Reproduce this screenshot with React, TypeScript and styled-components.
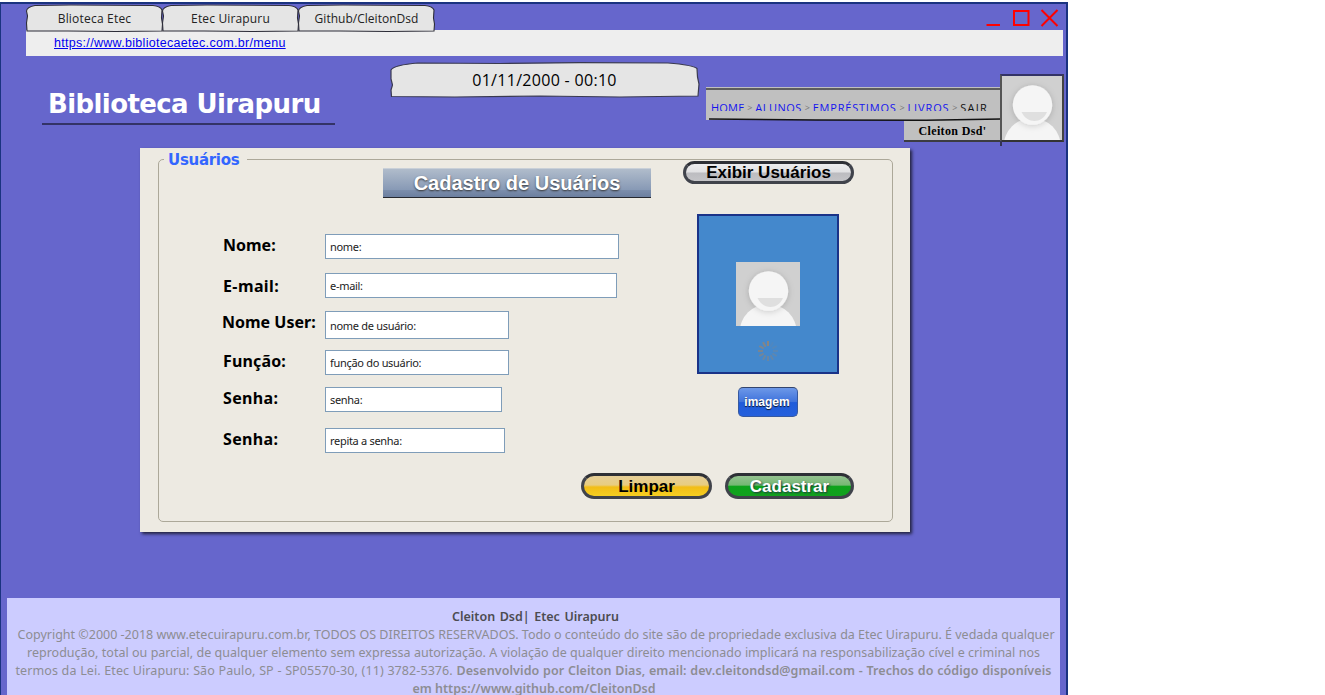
import React from "react";
import styled, { createGlobalStyle } from "styled-components";

const Global = createGlobalStyle`
  *, *::before, *::after { box-sizing: border-box; }
  body { margin: 0; background: #fff; overflow: hidden; }
`;

const sketch = `"Open Sans", "Noto Sans", sans-serif`;
const tahoma = `"Noto Sans", "DejaVu Sans", sans-serif`;
const arial = `"Liberation Sans", Arial, sans-serif`;

const Window = styled.div`
  width: 1068px;
  height: 693px;
  margin-top: 2px;
  background: #6666cc;
  border: solid #1a3380;
  border-width: 2px 2px 0 1px;
  display: flex;
  flex-direction: column;
  overflow: hidden;
`;

const TitleBar = styled.div`
  height: 26px;
  flex: none;
  padding: 0 6px 0 25px;
  display: flex;
  justify-content: space-between;
`;

const Tabs = styled.div`
  display: flex;
  position: relative;
  z-index: 1;
  height: 28px;
`;

const Tab = styled.div<{ $spacing: number }>`
  width: 136px;
  height: 28px;
  position: relative;
  display: flex;
  align-items: center;
  justify-content: center;
  white-space: nowrap;
  font: 12px ${sketch};
  letter-spacing: ${(p) => p.$spacing}px;
  color: #222;
  padding-left: 1px;
`;

const Outline = styled.svg`
  position: absolute;
  inset: 0;
  z-index: -1;
  overflow: visible;
`;

const Controls = styled.svg`
  width: 74px;
  height: 26px;
`;

const AddressBar = styled.div`
  flex: none;
  height: 26px;
  margin: 0 3px 0 25px;
  padding: 5px 0 0 28px;
  background: #eee;
  font: 12.5px/16px ${arial};
`;

const Url = styled.a`
  color: #0000ee;
  text-decoration: underline;
  letter-spacing: 0.3px;
`;

const Header = styled.header`
  flex: none;
  height: 92px;
  display: flex;
  align-items: flex-start;
`;

const Brand = styled.h1`
  margin: 30px 0 0 41px;
  width: 293px;
  height: 39px;
  padding-left: 6px;
  border-bottom: 2px solid #333366;
  font: bold 26px/37px "DejaVu Sans", sans-serif;
  letter-spacing: -0.6px;
  color: #fff;
  white-space: nowrap;
`;

const Clock = styled.div`
  position: relative;
  z-index: 0;
  margin: 6px 0 0 55px;
  width: 309px;
  height: 36px;
  display: flex;
  align-items: center;
  justify-content: center;
  font: 16px ${sketch};
  letter-spacing: 0.3px;
  color: #000;
`;

const Account = styled.div`
  flex: none;
  margin: 18px 0 0 7px;
  display: flex;
  align-items: flex-start;
`;

const AccountText = styled.div`
  margin-top: 13px;
  width: 295px;
  display: flex;
  flex-direction: column;
  align-items: flex-end;
`;

const Nav = styled.nav`
  position: relative;
  width: 295px;
  height: 33px;
  padding: 11px 0 0 5px;
  background: linear-gradient(#c0c0c0 1px, #5d5d5d 1px, #5d5d5d 3px, #c0c0c0 3px);
`;

const Crumbs = styled.div`
  width: 277px;
  height: 13px;
  overflow: hidden;
  display: flex;
  justify-content: space-between;
  white-space: nowrap;
  font: 11px/19px ${sketch};
  color: #111;
`;

const Crumb = styled.span<{ $link?: boolean; $spacing?: number }>`
  color: ${(p) => (p.$link ? "#1414ee" : "#111")};
  letter-spacing: ${(p) => p.$spacing ?? 0}px;
`;

const Chevron = styled.span`
  color: #777;
  font-size: 9px;
`;

const UserName = styled.div`
  width: 97px;
  height: 22px;
  background: #c0c0c0;
  border-bottom: 2px solid #3c3c42;
  font: bold 12px/22px "Liberation Serif", "Times New Roman", serif;
  letter-spacing: 0.35px;
  text-align: center;
  color: #000;
`;

const AvatarFrame = styled.div`
  position: relative;
  width: 64px;
  height: 68px;
  margin-left: -1px;
  border: 2px solid #333366;
  border-left-color: #555;
  border-right-color: #444;
  border-bottom-color: #333;
  &::after {
    content: "";
    position: absolute;
    left: -2px;
    bottom: -6px;
    width: 2px;
    height: 5px;
    background: #333355;
  }
`;

const Panel = styled.main`
  flex: none;
  width: 770px;
  height: 384px;
  margin-left: 139px;
  padding: 11px 17px 10px 18px;
  background: #edeae2;
  box-shadow: 2px 2px 3px #22223f;
`;

const Fieldset = styled.section`
  position: relative;
  height: 363px;
  border: 1px solid #aca899;
  border-radius: 5px;
`;

const Legend = styled.div`
  position: absolute;
  left: 5px;
  top: -9px;
  width: 83px;
  padding-left: 4px;
  background: #edeae2;
  color: #3366ff;
  font: bold 15px/19px "DejaVu Sans", sans-serif;
  letter-spacing: -0.3px;
`;

const PanelTop = styled.div`
  height: 54px;
  display: flex;
  align-items: flex-start;
  padding: 1px 0 0 224px;
  gap: 32px;
`;

const Title = styled.h2`
  margin: 7px 0 0;
  width: 268px;
  height: 30px;
  border-top: 1px solid #c9d0d8;
  border-bottom: 1px solid #26282e;
  background: linear-gradient(#b0bccb, #8799b5 75%, #7b8dab 76%, #6c7f9f);
  color: #fff;
  font: bold 20px/28px ${arial};
  text-align: center;
  text-shadow: 0 1px 2px #333;
`;

const pillFills = {
  silver: "linear-gradient(#f1f1f2, #e1e1e3 48%, #bcbcc0 52%, #c7c7ca)",
  gold: "linear-gradient(#e5cfa0, #e8cd80 46%, #f2bd16 54%, #f6d426)",
  green: "linear-gradient(#9fc59a, #75b873 46%, #0da31b 52%, #14a020)",
};

const Pill = styled.button<{ $tone: keyof typeof pillFills; $width: number; $height: number }>`
  width: ${(p) => p.$width}px;
  height: ${(p) => p.$height}px;
  padding: ${(p) => (p.$height > 24 ? 1 : 0)}px 0 0;
  border: 3px solid #40434b;
  border-top-color: #2e3036;
  border-radius: 13px;
  background: ${(p) => pillFills[p.$tone]};
  background-origin: border-box;
  color: ${(p) => (p.$tone === "green" ? "#fff" : "#000")};
  text-shadow: ${(p) => (p.$tone === "green" ? "1px 1px 2px #234" : "none")};
  font: bold 17px/17px ${arial};
`;

const PanelBody = styled.div`
  display: flex;
  height: 259px;
`;

const Form = styled.form`
  width: 475px;
  margin-left: 63px;
  padding-top: 20px;
`;

const Field = styled.label<{ $gap: number; $height: number }>`
  display: flex;
  align-items: flex-start;
  height: ${(p) => p.$height}px;
  margin-bottom: ${(p) => p.$gap}px;
`;

const LabelText = styled.span<{ $spacing: number; $nudge: number; $inset: number }>`
  width: 103px;
  padding-left: ${(p) => p.$inset}px;
  margin-top: ${(p) => p.$nudge}px;
  font: bold 16px/22px ${tahoma};
  letter-spacing: ${(p) => p.$spacing}px;
  white-space: nowrap;
  color: #000;
`;

const Input = styled.input<{ $width: number }>`
  width: ${(p) => p.$width}px;
  height: 100%;
  border: 1px solid #7f9db9;
  padding: 1px 4px 1px;
  background: #fff;
  font: 11px ${tahoma};
  letter-spacing: -0.3px;
  color: #222;
`;

const PhotoColumn = styled.div`
  width: 142px;
  display: flex;
  flex-direction: column;
  align-items: center;
`;

const Photo = styled.div`
  width: 142px;
  height: 160px;
  padding-top: 46px;
  border: 2px solid #1a3388;
  background: #4488cc;
  display: flex;
  flex-direction: column;
  align-items: center;
  gap: 15px;
`;

const ImageButton = styled.button`
  margin-top: 13px;
  width: 60px;
  height: 30px;
  padding: 0 2px 0 0;
  border: 1px solid #3659a0;
  border-top-color: #33456e;
  border-radius: 5px;
  background: linear-gradient(#6d98e8, #3f73dc 49%, #1f5cda 52%, #2560dc);
  color: #fff;
  font: bold 12px/26px ${arial};
  text-shadow: 0 1px 1px #112;
`;

const Actions = styled.div`
  display: flex;
  justify-content: flex-end;
  gap: 13px;
  padding-right: 38px;
`;

const Footer = styled.footer`
  flex: none;
  width: 1053px;
  height: 110px;
  margin: 66px 0 0 6px;
  padding-top: 10px;
  background: #ccccff;
  display: flex;
  flex-direction: column;
  align-items: center;
  font: 12.5px/18px ${tahoma};
  color: #8d8d93;
`;

const FooterLine = styled.div<{ $width: number; $spacing: number; $shift?: number; $dark?: boolean; $strong?: boolean }>`
  width: ${(p) => p.$width}px;
  margin-left: ${(p) => p.$shift ?? 0}px;
  white-space: nowrap;
  text-align-last: justify;
  letter-spacing: ${(p) => p.$spacing}px;
  font-weight: ${(p) => (p.$strong ? 600 : 400)};
  color: ${(p) => (p.$dark ? "#4c4c52" : "inherit")};
  b { font-weight: 600; }
`;

function TabOutline() {
  return (
    <Outline width="136" height="28" viewBox="0 0 136 28">
      <path
        d="M1 27 L.5 19 L1.500 12 L.5 7 Q1 3 9 1.500 L45 1 L127 1.500 Q135 2.500 136 6 L135.500 14 L136.500 20 L136 27 L90 27.500 L42 27 Z"
        fill="#e5e5e5" stroke="#2d2d38" strokeWidth="1.1"
      />
    </Outline>
  );
}

function Avatar({ width, height, id }: { width: number; height: number; id: string }) {
  return (
    <svg width={width} height={height} viewBox="0 0 64 64" preserveAspectRatio="xMidYMax slice" style={{ display: "block" }}>
      <defs>
        <filter id={id} x="-30%" y="-30%" width="160%" height="160%">
          <feDropShadow dx="0" dy="1" stdDeviation="3" floodColor="#000" floodOpacity="0.18" />
        </filter>
      </defs>
      <rect width="64" height="64" fill="#d0d0d0" />
      <circle cx="32.200" cy="70.500" r="28.500" fill="#f5f5f5" />
      <circle cx="32.500" cy="29" r="19.700" fill="#f5f5f5" filter={`url(#${id})`} />
      <path d="M21.500 36 H47 C42 48 27 48 21.500 36 Z" fill="#dfdfdf" />
    </svg>
  );
}

function Spinner() {
  return (
    <svg width="20" height="20" viewBox="-10 -10 20 20">
      {Array.from({ length: 12 }, (_, i) => (
        <line
          key={i} x1="0" y1="-5" x2="0" y2="-10" stroke="#8a8580" strokeWidth="2"
          opacity={1 - i * 0.078} transform={`rotate(${-i * 30})`}
        />
      ))}
    </svg>
  );
}

const fields = [
  { label: "Nome:", value: "nome:", width: 294, height: 25, gap: 14, nudge: 0, spacing: 0, inset: 1 },
  { label: "E-mail:", value: "e-mail:", width: 292, height: 25, gap: 13, nudge: 2, spacing: 0.4, inset: 1 },
  { label: "Nome User:", value: "nome de usuário:", width: 184, height: 28, gap: 11, nudge: 0, spacing: 0, inset: 0 },
  { label: "Função:", value: "função do usuário:", width: 184, height: 25, gap: 12, nudge: 0, spacing: 0.15, inset: 1 },
  { label: "Senha:", value: "senha:", width: 177, height: 25, gap: 16, nudge: 0, spacing: 0.35, inset: 1 },
  { label: "Senha:", value: "repita a senha:", width: 180, height: 25, gap: 0, nudge: 0, spacing: 0.35, inset: 1 },
];

export default function App() {
  return (
    <>
      <Global />
      <Window>
        <TitleBar>
          <Tabs>
            <Tab $spacing={0.2}><TabOutline />Blioteca Etec</Tab>
            <Tab $spacing={0.15}><TabOutline />Etec Uirapuru</Tab>
            <Tab $spacing={0.02}><TabOutline />Github/CleitonDsd</Tab>
          </Tabs>
          <Controls viewBox="0 0 74 26" fill="none" stroke="#f00" strokeWidth="2">
            <path d="M.5 21 H14 M28 7 H42.500 V21 H28 Z M55.500 6 L71.500 22 M71.500 6 L55.500 22" />
          </Controls>
        </TitleBar>
        <AddressBar><Url>https://www.bibliotecaetec.com.br/menu</Url></AddressBar>
        <Header>
          <Brand>Biblioteca Uirapuru</Brand>
          <Clock>
            <Outline width="309" height="36" viewBox="0 0 309 36">
              <path
                d="M1.500 34.500 L1 28 L2.500 23 L1 17 V8 Q4 3 28 1 L110 1.500 L190 .7 L278 1 Q303 3 307 6.500 L307.500 15 L309 22 L308 34 L230 35 L150 34 L65 35 Z"
                fill="#e5e5e5" stroke="#3a3a50" strokeWidth="1.2"
              />
            </Outline>
            01/11/2000 - 00:10
          </Clock>
          <Account>
            <AccountText>
              <Nav>
                <Crumbs>
                  <Crumb $link $spacing={0.2}>HOME</Crumb><Chevron>&gt;</Chevron>
                  <Crumb $link $spacing={0.5}>ALUNOS</Crumb><Chevron>&gt;</Chevron>
                  <Crumb $link $spacing={0.8}>EMPRÉSTIMOS</Crumb><Chevron>&gt;</Chevron>
                  <Crumb $link $spacing={0.9}>LIVROS</Crumb><Chevron>&gt;</Chevron>
                  <Crumb $spacing={1.2}>SAIR</Crumb>
                </Crumbs>
                <Outline width="295" height="34" viewBox="0 0 295 34" style={{ zIndex: 0 }}>
                  <path d="M3 32 L110 33 L220 33.200 L295 32" fill="none" stroke="#111" strokeWidth="1.600" />
                </Outline>
              </Nav>
              <UserName>Cleiton Dsd'</UserName>
            </AccountText>
            <AvatarFrame><Avatar width={60} height={64} id="headerShadow" /></AvatarFrame>
          </Account>
        </Header>
        <Panel>
          <Fieldset>
            <Legend>Usuários</Legend>
            <PanelTop>
              <Title>Cadastro de Usuários</Title>
              <Pill $tone="silver" $width={171} $height={23}>Exibir Usuários</Pill>
            </PanelTop>
            <PanelBody>
              <Form>
                {fields.map((f, i) => (
                  <Field key={i} $gap={f.gap} $height={f.height}>
                    <LabelText $spacing={f.spacing} $nudge={f.nudge} $inset={f.inset}>{f.label}</LabelText>
                    <Input $width={f.width} defaultValue={f.value} />
                  </Field>
                ))}
              </Form>
              <PhotoColumn>
                <Photo>
                  <Avatar width={64} height={64} id="photoShadow" />
                  <Spinner />
                </Photo>
                <ImageButton type="button">imagem</ImageButton>
              </PhotoColumn>
            </PanelBody>
            <Actions>
              <Pill $tone="gold" $width={131} $height={26}>Limpar</Pill>
              <Pill $tone="green" $width={129} $height={26}>Cadastrar</Pill>
            </Actions>
          </Fieldset>
        </Panel>
        <Footer>
          <FooterLine $width={167} $spacing={0} $shift={4} $dark $strong>Cleiton Dsd| Etec Uirapuru</FooterLine>
          <FooterLine $width={1036} $spacing={0} $shift={4}>Copyright ©2000 -2018 www.etecuirapuru.com.br, TODOS OS DIREITOS RESERVADOS. Todo o conteúdo do site são de propriedade exclusiva da Etec Uirapuru. É vedada qualquer</FooterLine>
          <FooterLine $width={1013} $spacing={0}>reprodução, total ou parcial, de qualquer elemento sem expressa autorização. A violação de qualquer direito mencionado implicará na responsabilização cível e criminal nos</FooterLine>
          <FooterLine $width={1036} $spacing={0.08}>termos da Lei. Etec Uirapuru: São Paulo, SP - SP05570-30, (11) 3782-5376. <b>Desenvolvido por Cleiton Dias, email: dev.cleitondsd@gmail.com - Trechos do código disponíveis</b></FooterLine>
          <FooterLine $width={243} $spacing={0} $shift={1} $strong>em https://www.github.com/CleitonDsd</FooterLine>
        </Footer>
      </Window>
    </>
  );
}
